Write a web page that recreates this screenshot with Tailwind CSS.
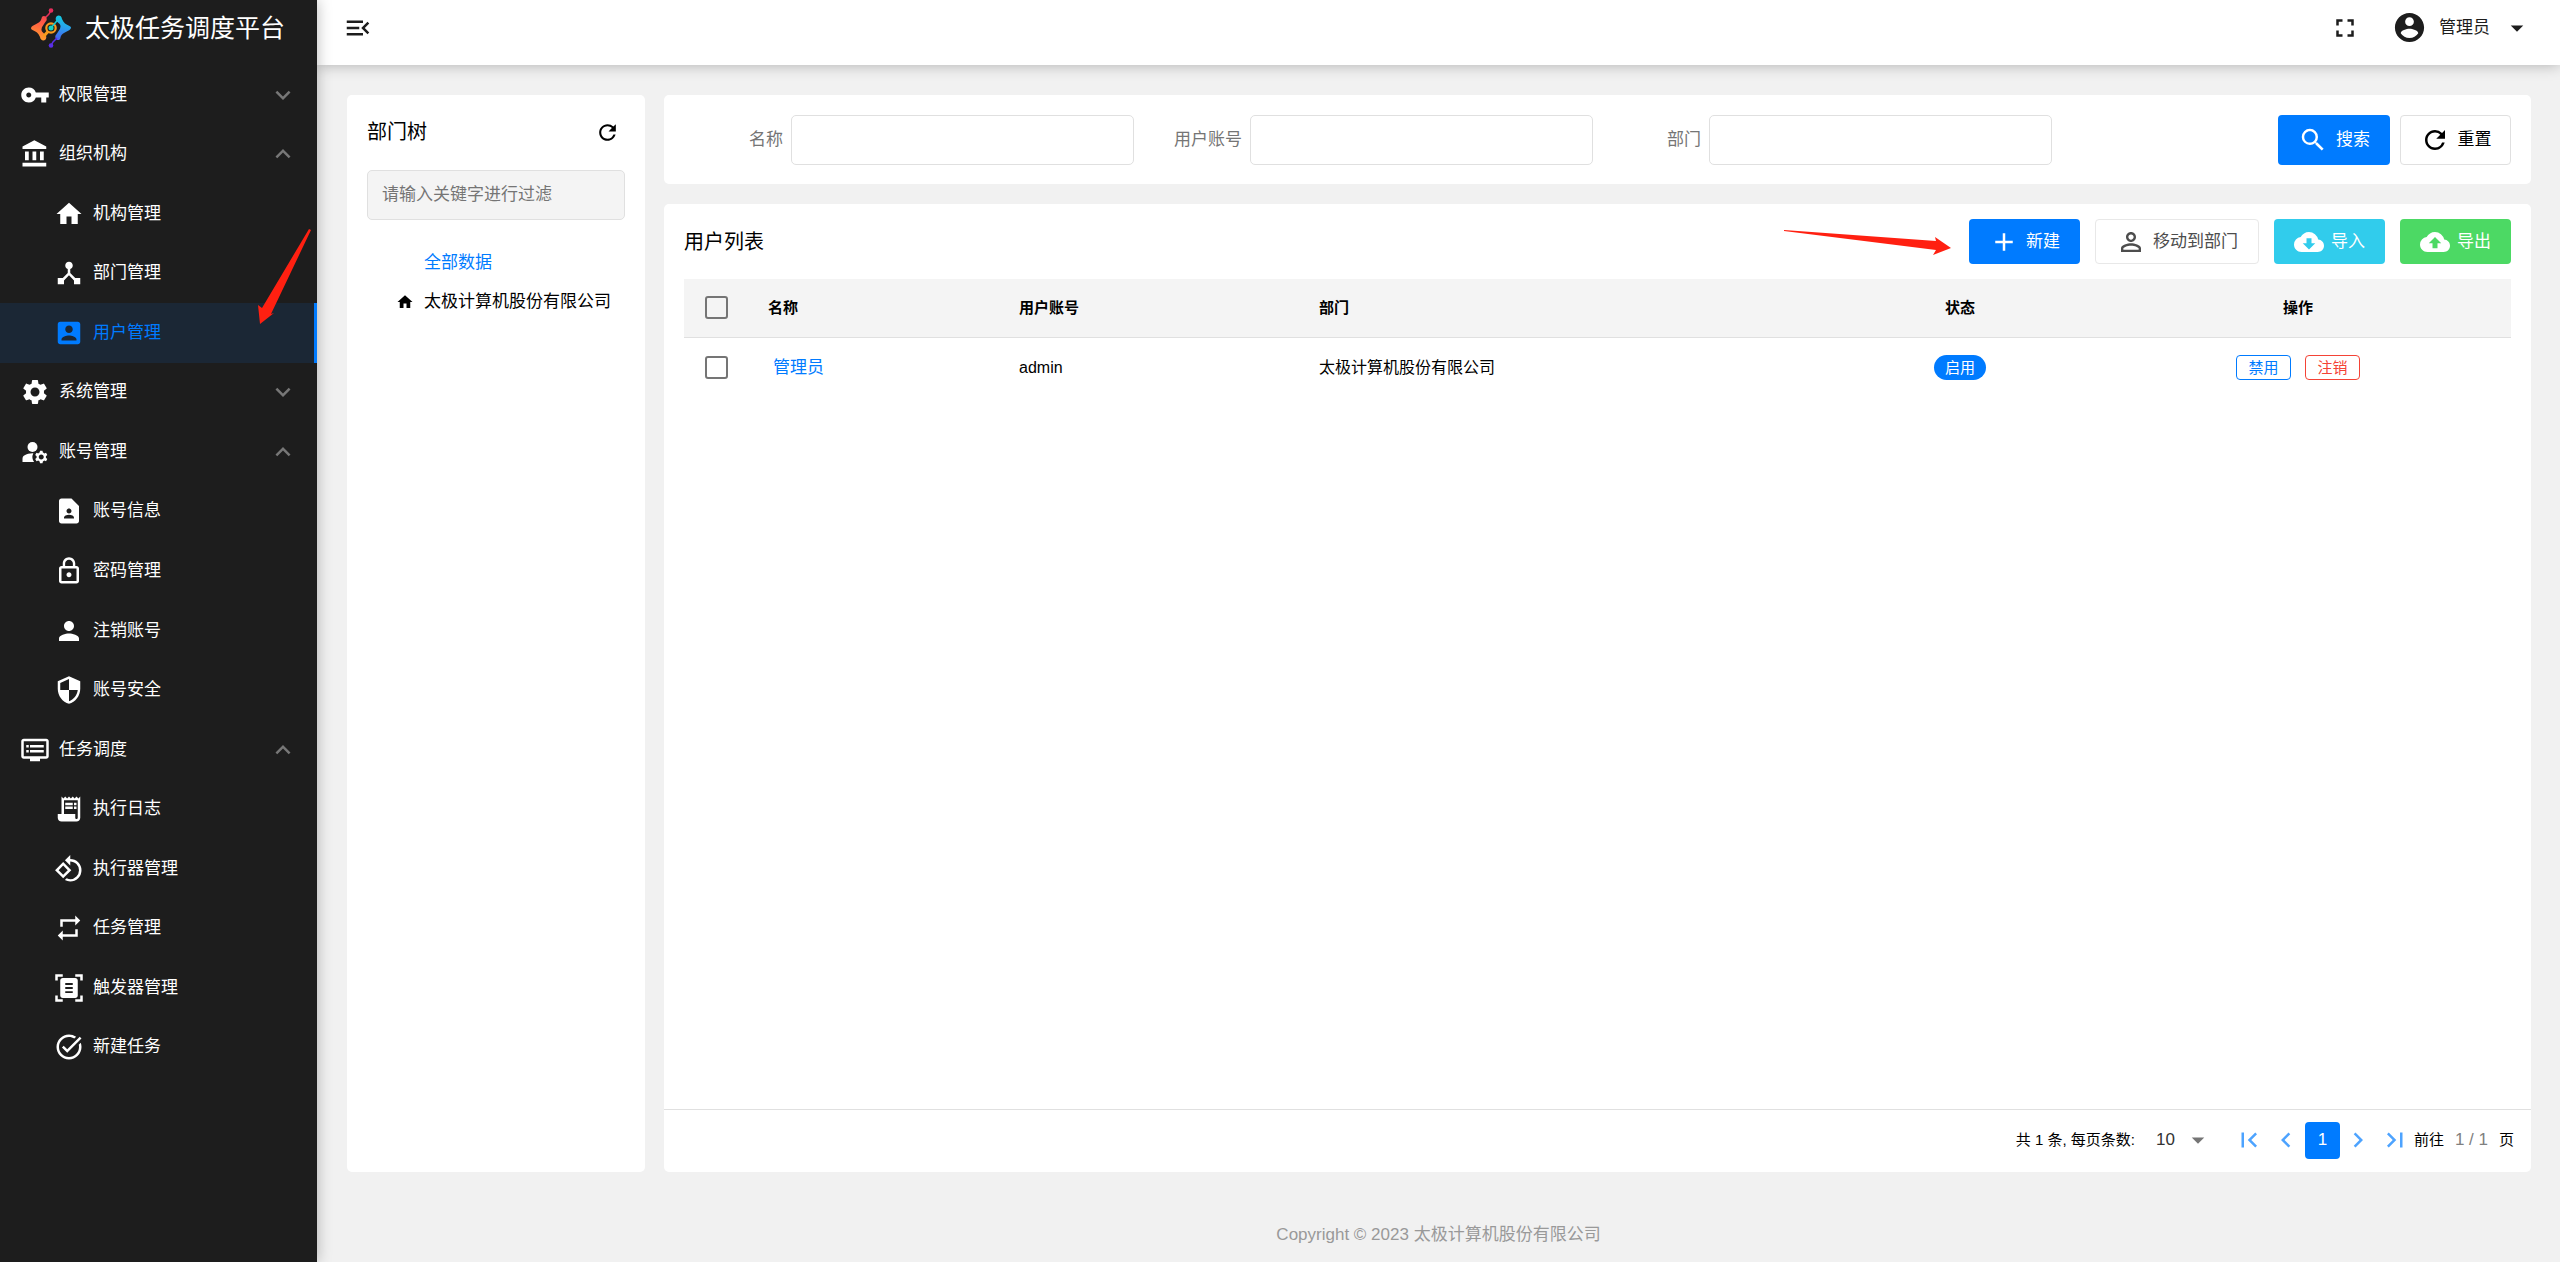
<!DOCTYPE html>
<html lang="zh-CN">
<head>
<meta charset="utf-8">
<title>太极任务调度平台</title>
<script src="https://cdn.jsdelivr.net/npm/@tailwindcss/browser@4"></script>
</head>
<body class="relative flex min-h-screen bg-[#f1f1f1] font-['Liberation_Sans','Noto_Sans_CJK_SC',sans-serif] text-[17px] leading-6 text-black">

<svg class="hidden" aria-hidden="true">
  <symbol id="key" viewBox="0 0 24 24"><path d="M12.65 10A5.99 5.99 0 0 0 7 6c-3.31 0-6 2.69-6 6s2.69 6 6 6a5.99 5.99 0 0 0 5.65-4H17v4h4v-4h2v-4H12.65zM7 14c-1.1 0-2-.9-2-2s.9-2 2-2 2 .9 2 2-.9 2-2 2z"/></symbol>
  <symbol id="bank" viewBox="0 0 24 24"><path d="M4 10v7h3v-7H4zm6 0v7h3v-7h-3zM2 22h19v-3H2v3zm14-12v7h3v-7h-3zm-4.5-9L2 6v2h19V6l-9.500-5z"/></symbol>
  <symbol id="home" viewBox="0 0 24 24"><path d="M10 20v-6h4v6h5v-8h3L12 3 2 12h3v8z"/></symbol>
  <symbol id="hub" viewBox="0 0 24 24"><path d="M17 16l-4-4V8.820C14.160 8.400 15 7.300 15 6c0-1.660-1.340-3-3-3S9 4.340 9 6c0 1.300.84 2.400 2 2.820V12l-4 4H3v5h5v-3.050l4-4.200 4 4.200V21h5v-5h-4z"/></symbol>
  <symbol id="userbox" viewBox="0 0 24 24"><path d="M3 5v14c0 1.100.89 2 2 2h14c1.100 0 2-.9 2-2V5c0-1.100-.9-2-2-2H5a2 2 0 0 0-2 2zm12 4c0 1.660-1.340 3-3 3s-3-1.340-3-3 1.340-3 3-3 3 1.340 3 3zm-9 8c0-2 4-3.100 6-3.100s6 1.100 6 3.100v1H6v-1z"/></symbol>
  <symbol id="gear" viewBox="0 0 24 24"><path d="M19.140 12.940c.04-.3.06-.61.06-.94 0-.32-.02-.64-.07-.94l2.030-1.580a.49.49 0 0 0 .12-.61l-1.920-3.320a.488.488 0 0 0-.59-.22l-2.390.96c-.5-.38-1.030-.7-1.620-.94l-.36-2.540a.484.484 0 0 0-.48-.41h-3.840c-.24 0-.43.17-.47.41l-.36 2.540c-.59.24-1.130.57-1.620.94l-2.390-.96c-.22-.08-.47 0-.59.22L2.740 8.870c-.12.21-.08.47.12.61l2.030 1.580c-.05.3-.09.63-.09.94s.02.64.07.94l-2.030 1.580a.49.49 0 0 0-.12.61l1.920 3.320c.12.22.37.29.59.22l2.390-.96c.5.38 1.030.7 1.620.94l.36 2.540c.05.24.24.41.48.41h3.840c.24 0 .44-.17.47-.41l.36-2.540c.59-.24 1.130-.56 1.620-.94l2.390.96c.22.08.47 0 .59-.22l1.920-3.320c.12-.22.07-.47-.12-.61l-2.010-1.580zM12 15.600c-1.980 0-3.600-1.620-3.600-3.600s1.620-3.600 3.600-3.600 3.600 1.620 3.600 3.600-1.620 3.600-3.600 3.600z"/></symbol>
  <symbol id="manage" viewBox="0 0 24 24"><circle cx="10" cy="8" r="4"/><path d="M10.670 13.020C10.450 13.010 10.230 13 10 13c-2.420 0-4.680.67-6.610 1.820-.88.52-1.390 1.500-1.390 2.530V20h9.260a6.963 6.963 0 0 1-.59-6.980zM20.750 16c0-.22-.03-.42-.06-.63l1.140-1.010-1-1.730-1.450.49c-.32-.27-.68-.48-1.080-.63L18 11h-2l-.3 1.490c-.4.15-.76.36-1.080.63l-1.450-.49-1 1.730 1.140 1.010c-.03.21-.06.41-.06.63s.03.42.06.63l-1.140 1.010 1 1.730 1.450-.49c.32.27.68.48 1.080.63L16 21h2l.3-1.490c.4-.15.76-.36 1.080-.63l1.450.49 1-1.730-1.140-1.010c.03-.21.06-.41.06-.63zM17 18c-1.100 0-2-.9-2-2s.9-2 2-2 2 .9 2 2-.9 2-2 2z"/></symbol>
  <symbol id="contact" viewBox="0 0 24 24"><path d="M14 2H6c-1.100 0-2 .9-2 2v16c0 1.100.9 2 2 2h12c1.100 0 2-.9 2-2V8l-6-6zm-2 8c1.100 0 2 .9 2 2s-.9 2-2 2-2-.9-2-2 .9-2 2-2zm4 8H8v-.57c0-.81.48-1.530 1.220-1.850a6.950 6.950 0 0 1 5.560 0A2.010 2.010 0 0 1 16 17.430V18z"/></symbol>
  <symbol id="lock" viewBox="0 0 24 24"><path d="M12 17c1.100 0 2-.9 2-2s-.9-2-2-2-2 .9-2 2 .9 2 2 2zm6-9h-1V6c0-2.760-2.240-5-5-5S7 3.240 7 6v2H6c-1.100 0-2 .9-2 2v10c0 1.100.9 2 2 2h12c1.100 0 2-.9 2-2V10c0-1.100-.9-2-2-2zM8.900 6c0-1.710 1.390-3.100 3.100-3.100s3.100 1.390 3.100 3.100v2H8.900V6zM18 20H6V10h12v10z"/></symbol>
  <symbol id="person" viewBox="0 0 24 24"><path d="M12 12c2.210 0 4-1.790 4-4s-1.790-4-4-4-4 1.790-4 4 1.790 4 4 4zm0 2c-2.670 0-8 1.340-8 4v2h16v-2c0-2.660-5.330-4-8-4z"/></symbol>
  <symbol id="shield" viewBox="0 0 24 24"><path d="M12 1L3 5v6c0 5.550 3.840 10.740 9 12 5.160-1.260 9-6.450 9-12V5l-9-4zm0 10.990h7c-.53 4.120-3.280 7.790-7 8.940V12H5V6.300l7-3.110v8.800z"/></symbol>
  <symbol id="dvr" viewBox="0 0 24 24"><path d="M21 3H3c-1.100 0-2 .9-2 2v12c0 1.100.9 2 2 2h5v2h8v-2h5c1.100 0 1.990-.9 1.990-2L23 5c0-1.100-.9-2-2-2zm0 14H3V5h18v12zm-2-9H8v2h11V8zm0 4H8v2h11v-2zM7 8H5v2h2V8zm0 4H5v2h2v-2z"/></symbol>
  <symbol id="receipt" viewBox="0 0 24 24"><path d="M19.500 3.500L18 2l-1.500 1.500L15 2l-1.500 1.500L12 2l-1.500 1.500L9 2 7.500 3.500 6 2v14H3v3c0 1.660 1.340 3 3 3h12c1.660 0 3-1.340 3-3V2l-1.500 1.500zM19 19c0 .55-.45 1-1 1s-1-.45-1-1v-3H8V5h11v14z"/><path d="M9 7h6v2H9zM16 7h2v2h-2zM9 10h6v2H9zM16 10h2v2h-2z"/></symbol>
  <symbol id="rotate" viewBox="0 0 24 24"><path d="M7.340 6.410L.86 12.900l6.490 6.480 6.490-6.480-6.500-6.490zM3.690 12.900l3.660-3.660L11 12.900l-3.660 3.660-3.650-3.660zm15.670-6.260A8.950 8.950 0 0 0 13 4V.76L8.760 5 13 9.240V6c1.790 0 3.580.68 4.950 2.050a7.007 7.007 0 0 1 0 9.900 6.973 6.973 0 0 1-7.790 1.440l-1.490 1.490C10.020 21.620 11.510 22 13 22c2.300 0 4.610-.88 6.360-2.640a8.980 8.980 0 0 0 0-12.720z"/></symbol>
  <symbol id="repeat" viewBox="0 0 24 24"><path d="M7 7h10v3l4-4-4-4v3H5v6h2V7zm10 10H7v-3l-4 4 4 4v-3h12v-6h-2v4z"/></symbol>
  <symbol id="scan" viewBox="0 0 24 24"><path fill-rule="evenodd" d="M3 6H1V1h6v2H3zM21 6V3h-4V1h6v5zM3 18v3h4v2H1v-5zM21 18h2v5h-6v-2h4zM7 4h10c1.100 0 2 .9 2 2v12c0 1.100-.9 2-2 2H7c-1.100 0-2-.9-2-2V6c0-1.100.9-2 2-2zm2 4v1.500h6V8zm0 3.250v1.500h6v-1.500zm0 3.250V16h6v-1.500z"/></symbol>
  <symbol id="taskdone" viewBox="0 0 24 24"><path d="M22 5.180L10.590 16.600l-4.240-4.240 1.410-1.410 2.830 2.830 10-10L22 5.180zM19.790 10.220c.13.570.21 1.170.21 1.780 0 4.420-3.580 8-8 8s-8-3.580-8-8 3.580-8 8-8c1.580 0 3.040.46 4.280 1.250l1.440-1.440A9.900 9.900 0 0 0 12 2C6.480 2 2 6.480 2 12s4.480 10 10 10 10-4.480 10-10c0-1.190-.22-2.330-.6-3.390l-1.610 1.610z"/></symbol>
  <symbol id="down" viewBox="0 0 24 24"><path d="M7.410 8.590L12 13.170l4.590-4.580L18 10l-6 6-6-6z"/></symbol>
  <symbol id="up" viewBox="0 0 24 24"><path d="M7.410 15.410L12 10.830l4.590 4.580L18 14l-6-6-6 6z"/></symbol>
  <symbol id="menuopen" viewBox="0 0 24 24"><path d="M3 18h13v-2H3v2zm0-5h10v-2H3v2zm0-7v2h13V6H3zm18 9.590L17.420 12 21 8.410 19.590 7l-5 5 5 5L21 15.590z"/></symbol>
  <symbol id="fullscreen" viewBox="0 0 24 24"><path d="M7 14H5v5h5v-2H7v-3zm-2-4h2V7h3V5H5v5zm12 7h-3v2h5v-5h-2v3zM14 5v2h3v3h2V5h-5z"/></symbol>
  <symbol id="account" viewBox="0 0 24 24"><path d="M12 2C6.480 2 2 6.480 2 12s4.480 10 10 10 10-4.480 10-10S17.520 2 12 2zm0 3c1.660 0 3 1.340 3 3s-1.340 3-3 3-3-1.340-3-3 1.340-3 3-3zm0 14.200a7.200 7.200 0 0 1-6-3.220c.03-1.990 4-3.080 6-3.080 1.990 0 5.970 1.090 6 3.080a7.200 7.200 0 0 1-6 3.220z"/></symbol>
  <symbol id="caret" viewBox="0 0 24 24"><path d="M7 10l5 5 5-5z"/></symbol>
  <symbol id="refresh" viewBox="0 0 24 24"><path d="M17.650 6.350A7.958 7.958 0 0 0 12 4c-4.420 0-7.990 3.580-7.990 8s3.570 8 7.990 8c3.730 0 6.840-2.550 7.730-6h-2.080A5.990 5.990 0 0 1 12 18c-3.310 0-6-2.690-6-6s2.690-6 6-6c1.660 0 3.140.69 4.220 1.780L13 11h7V4l-2.350 2.350z"/></symbol>
  <symbol id="search" viewBox="0 0 24 24"><path d="M15.500 14h-.79l-.28-.27A6.471 6.471 0 0 0 16 9.500 6.500 6.500 0 1 0 9.500 16c1.610 0 3.090-.59 4.230-1.570l.27.28v.79l5 4.990L20.490 19l-4.990-5zm-6 0C7.010 14 5 11.990 5 9.500S7.010 5 9.500 5 14 7.010 14 9.500 11.990 14 9.500 14z"/></symbol>
  <symbol id="add" viewBox="0 0 24 24"><path d="M19 13h-6v6h-2v-6H5v-2h6V5h2v6h6v2z"/></symbol>
  <symbol id="persono" viewBox="0 0 24 24"><path d="M12 5.900c1.160 0 2.100.94 2.100 2.100s-.94 2.100-2.100 2.100S9.900 9.160 9.900 8s.94-2.100 2.100-2.100m0 9c2.970 0 6.100 1.460 6.100 2.100v1.100H5.900V17c0-.64 3.130-2.100 6.100-2.100M12 4C9.790 4 8 5.790 8 8s1.790 4 4 4 4-1.790 4-4-1.790-4-4-4zm0 9c-2.670 0-8 1.340-8 4v3h16v-3c0-2.660-5.330-4-8-4z"/></symbol>
  <symbol id="clouddown" viewBox="0 0 24 24"><path fill-rule="evenodd" d="M19.350 10.040A7.490 7.490 0 0 0 12 4C9.110 4 6.600 5.640 5.350 8.040A5.994 5.994 0 0 0 0 14c0 3.310 2.690 6 6 6h13c2.760 0 5-2.240 5-5 0-2.640-2.050-4.780-4.650-4.960zM17 13l-5 5-5-5h3V9h4v4h3z"/></symbol>
  <symbol id="cloudup" viewBox="0 0 24 24"><path fill-rule="evenodd" d="M19.350 10.040A7.490 7.490 0 0 0 12 4C9.110 4 6.600 5.640 5.350 8.040A5.994 5.994 0 0 0 0 14c0 3.310 2.690 6 6 6h13c2.760 0 5-2.240 5-5 0-2.640-2.050-4.780-4.650-4.960zM14 13v4h-4v-4H7l5-5 5 5h-3z"/></symbol>
  <symbol id="first" viewBox="0 0 24 24"><path d="M18.410 16.590L13.820 12l4.590-4.590L17 6l-6 6 6 6zM6 6h2v12H6z"/></symbol>
  <symbol id="last" viewBox="0 0 24 24"><path d="M5.590 7.410L10.180 12l-4.590 4.590L7 18l6-6-6-6zM16 6h2v12h-2z"/></symbol>
  <symbol id="prev" viewBox="0 0 24 24"><path d="M15.410 7.410L14 6l-6 6 6 6 1.410-1.410L10.830 12z"/></symbol>
  <symbol id="next" viewBox="0 0 24 24"><path d="M10 6L8.590 7.410 13.170 12l-4.580 4.590L10 18l6-6z"/></symbol>
</svg>

<aside class="z-20 w-[317px] shrink-0 bg-[#1d1d1d] text-white shadow-[0_0_14px_rgba(0,0,0,0.28)]">
  <div class="flex h-[65px] items-center gap-[14px] pb-[10px] pl-[31px]">
    <svg class="size-10" viewBox="0 0 40 40" fill="none">
      <defs>
        <linearGradient id="warm" x1="20" y1="0" x2="12" y2="32" gradientUnits="userSpaceOnUse"><stop stop-color="#e62e5c"/><stop offset=".5" stop-color="#ff5a45"/><stop offset="1" stop-color="#ff9a2e"/></linearGradient>
        <linearGradient id="cool" x1="28" y1="8" x2="20" y2="40" gradientUnits="userSpaceOnUse"><stop stop-color="#12cbe0"/><stop offset=".4" stop-color="#3191ee"/><stop offset="1" stop-color="#5a2ee6"/></linearGradient>
      </defs>
      <path d="M20 2.500L18 6l-4 4" stroke="#e62e5c" stroke-width="1.500"/>
      <circle cx="20" cy="2.500" r="2.300" fill="#e62e5c"/>
      <path d="M10.500 10.500C9.500 15 5 15.500 1.500 18c-2 1.500-2 3 0 4C5 23.500 7.500 25 9 29c.5 4.500 6 4.500 6.300.5.2-3-2.300-3.500-4.300-6-2-3.500 2-7 4.500-11 1.500-4.500-4.500-6.500-5-2z" fill="url(#warm)"/>
      <circle cx="20" cy="20" r="4.700" stroke="#f79a1c" stroke-width="2.200"/>
      <path d="M12.500 28.500l4.500-5" stroke="#f79a1c" stroke-width="3"/>
      <path d="M29.500 29.500C30.500 25 35 24.500 38.500 22c2-1.500 2-3 0-4C35 16.500 32.500 15 31 11c-.5-4.500-6-4.500-6.300-.5-.2 3 2.300 3.500 4.300 6 2 3.500-2 7-4.500 11-1.500 4.500 4.500 6.500 5 2z" fill="url(#cool)"/>
      <path d="M20 37.500l2-3.500 4-4" stroke="#5a2ee6" stroke-width="1.500"/>
      <circle cx="20" cy="37.500" r="2.300" fill="#5a2ee6"/>
      <path d="M20 20l7-8.500" stroke="#12cbd0" stroke-width="1.500"/>
      <circle cx="20" cy="20" r="2.500" fill="#14d4c0"/>
    </svg>
    <h1 class="text-[25px] leading-8">太极任务调度平台</h1>
  </div>
  <nav class="grid h-[1012px] auto-rows-fr [&_a]:flex [&_a]:items-center [&_a]:gap-[9px] [&_svg]:size-[30px] [&_svg]:fill-current">
    <a href="#" class="pr-[19px] pl-5"><svg><use href="#key"/></svg><span class="flex-1">权限管理</span><svg class="text-[#777]"><use href="#down"/></svg></a>
    <a href="#" class="pr-[19px] pl-5"><svg><use href="#bank"/></svg><span class="flex-1">组织机构</span><svg class="text-[#777]"><use href="#up"/></svg></a>
    <a href="#" class="pl-[54px]"><svg><use href="#home"/></svg>机构管理</a>
    <a href="#" class="pl-[54px]"><svg><use href="#hub"/></svg>部门管理</a>
    <a href="#" class="border-r-3 border-[#007bff] bg-[#1b2735] pl-[54px] text-[#007bff]"><svg><use href="#userbox"/></svg>用户管理</a>
    <a href="#" class="pr-[19px] pl-5"><svg><use href="#gear"/></svg><span class="flex-1">系统管理</span><svg class="text-[#777]"><use href="#down"/></svg></a>
    <a href="#" class="pr-[19px] pl-5"><svg><use href="#manage"/></svg><span class="flex-1">账号管理</span><svg class="text-[#777]"><use href="#up"/></svg></a>
    <a href="#" class="pl-[54px]"><svg><use href="#contact"/></svg>账号信息</a>
    <a href="#" class="pl-[54px]"><svg><use href="#lock"/></svg>密码管理</a>
    <a href="#" class="pl-[54px]"><svg><use href="#person"/></svg>注销账号</a>
    <a href="#" class="pl-[54px]"><svg><use href="#shield"/></svg>账号安全</a>
    <a href="#" class="pr-[19px] pl-5"><svg><use href="#dvr"/></svg><span class="flex-1">任务调度</span><svg class="text-[#777]"><use href="#up"/></svg></a>
    <a href="#" class="pl-[54px]"><svg><use href="#receipt"/></svg>执行日志</a>
    <a href="#" class="pl-[54px]"><svg><use href="#rotate"/></svg>执行器管理</a>
    <a href="#" class="pl-[54px]"><svg><use href="#repeat"/></svg>任务管理</a>
    <a href="#" class="pl-[54px]"><svg><use href="#scan"/></svg>触发器管理</a>
    <a href="#" class="pl-[54px]"><svg><use href="#taskdone"/></svg>新建任务</a>
  </nav>
</aside>

<div class="flex min-w-0 flex-1 flex-col">
  <header class="z-10 flex h-[65px] items-center justify-between bg-white pr-7 pb-[10px] pl-[26px] text-[#1d1d1d] shadow-[0_0_14px_rgba(0,0,0,0.28)]">
    <button type="button" aria-label="收起菜单"><svg class="size-[30px] fill-current"><use href="#menuopen"/></svg></button>
    <div class="flex items-center">
      <button type="button" aria-label="全屏" class="mr-8"><svg class="size-[30px] fill-current"><use href="#fullscreen"/></svg></button>
      <button type="button" class="flex items-center gap-3"><svg class="size-[35px] fill-current"><use href="#account"/></svg>管理员<svg class="size-[30px] fill-current"><use href="#caret"/></svg></button>
    </div>
  </header>

  <main class="flex flex-1 gap-[19px] pt-[30px] pr-[29px] pl-[30px]">
    <section class="w-[298px] shrink-0 rounded-[5px] bg-white px-5 pt-[22px]">
      <div class="flex items-center justify-between pr-[5px]">
        <h2 class="text-xl leading-[30px]">部门树</h2>
        <button type="button" aria-label="刷新"><svg class="size-[25px] fill-current"><use href="#refresh"/></svg></button>
      </div>
      <input type="text" aria-label="过滤部门" placeholder="请输入关键字进行过滤" class="mt-[23px] h-[50px] w-full rounded-[5px] border border-[#e0e0e0] bg-[#f4f4f4] px-[14px] placeholder:text-[#757575]">
      <ul class="mt-[23px] flex flex-col">
        <li class="flex h-[39px] items-center pl-[57px] text-[#007bff]">全部数据</li>
        <li class="flex h-[39px] items-center gap-[10px] pl-[29px]"><svg class="size-[18px] fill-current"><use href="#home"/></svg>太极计算机股份有限公司</li>
      </ul>
    </section>

    <div class="flex min-w-0 flex-1 flex-col gap-5">
      <form class="grid grid-cols-4 rounded-[5px] bg-white pt-5 pr-5 pb-[19px] pl-[11px]">
        <div class="flex items-center gap-2"><label for="f-name" class="w-[108px] shrink-0 text-right text-[#757575]">名称</label><input id="f-name" type="text" class="h-[50px] min-w-0 flex-1 rounded-[5px] border border-[#e0e0e0] px-3"></div>
        <div class="flex items-center gap-2"><label for="f-user" class="w-[108px] shrink-0 text-right text-[#757575]">用户账号</label><input id="f-user" type="text" class="h-[50px] min-w-0 flex-1 rounded-[5px] border border-[#e0e0e0] px-3"></div>
        <div class="flex items-center gap-2"><label for="f-dept" class="w-[108px] shrink-0 text-right text-[#757575]">部门</label><input id="f-dept" type="text" class="h-[50px] min-w-0 flex-1 rounded-[5px] border border-[#e0e0e0] px-3"></div>
        <div class="flex justify-end gap-[10px]">
          <button type="button" class="flex h-[50px] w-[112px] items-center justify-center gap-2 rounded-[4px] bg-[#007bff] text-white"><svg class="size-[30px] fill-current"><use href="#search"/></svg>搜索</button>
          <button type="reset" class="flex h-[50px] w-[111px] items-center justify-center gap-2 rounded-[4px] border border-[#e0e0e0]"><svg class="size-[30px] fill-current"><use href="#refresh"/></svg>重置</button>
        </div>
      </form>

      <section class="flex flex-1 flex-col rounded-[5px] bg-white">
        <div class="flex items-center gap-[15px] px-5 py-[15px]">
          <h2 class="flex-1 text-xl leading-[30px]">用户列表</h2>
          <button type="button" class="flex h-[45px] w-[111px] items-center justify-center gap-[7px] rounded-[4px] bg-[#007bff] text-white"><svg class="size-[30px] fill-current"><use href="#add"/></svg>新建</button>
          <button type="button" class="flex h-[45px] w-[164px] items-center justify-center gap-[7px] rounded-[4px] border border-[#e8e8e8] text-[#4d4d4d]"><svg class="size-[30px] fill-current"><use href="#persono"/></svg>移动到部门</button>
          <button type="button" class="flex h-[45px] w-[111px] items-center justify-center gap-[7px] rounded-[4px] bg-[#31ccec] text-white"><svg class="size-[30px] fill-current"><use href="#clouddown"/></svg>导入</button>
          <button type="button" class="flex h-[45px] w-[111px] items-center justify-center gap-[7px] rounded-[4px] bg-[#4cd964] text-white"><svg class="size-[30px] fill-current"><use href="#cloudup"/></svg>导出</button>
        </div>
        <div class="px-5">
          <table class="w-full table-fixed border-collapse text-left">
            <colgroup><col class="w-[64px]"><col class="w-[251px]"><col class="w-[300px]"><col><col class="w-[250px]"><col class="w-[426px]"></colgroup>
            <thead class="border-b border-[#e0e0e0] bg-[#f4f4f4] text-[15px]">
              <tr class="h-[58px]">
                <th class="pl-[21px]"><input type="checkbox" aria-label="全选" class="block size-[23px] appearance-none rounded-[3px] border-2 border-[#757575]"></th>
                <th class="px-5">名称</th><th class="px-5">用户账号</th><th class="px-5">部门</th><th class="text-center">状态</th><th class="text-center">操作</th>
              </tr>
            </thead>
            <tbody class="text-base">
              <tr class="h-[61px]">
                <td class="pl-[21px]"><input type="checkbox" aria-label="选择管理员" class="block size-[23px] appearance-none rounded-[3px] border-2 border-[#757575]"></td>
                <td class="px-[25px] text-[17px]"><a href="#" class="text-[#007bff]">管理员</a></td>
                <td class="px-5">admin</td>
                <td class="px-5">太极计算机股份有限公司</td>
                <td><span class="mx-auto flex h-[25px] w-[52px] items-center justify-center rounded-full bg-[#007bff] text-[15px] text-white">启用</span></td>
                <td><div class="flex justify-center gap-[14px] text-[15px]"><button type="button" class="flex h-[25px] w-[55px] items-center justify-center rounded-[4px] border border-[#007bff] text-[#007bff]">禁用</button><button type="button" class="flex h-[25px] w-[55px] items-center justify-center rounded-[4px] border border-[#f44336] text-[#f44336]">注销</button></div></td>
              </tr>
            </tbody>
          </table>
        </div>
        <div class="mt-auto flex h-[63px] items-center justify-end border-t border-[#e0e0e0] pr-[17px] pb-[2px] text-[15px]">
          <label for="size">共 1 条, 每页条数:</label>
          <div class="ml-[21px] flex w-[57px] items-center text-[#333]">
            <select id="size" class="w-full appearance-none bg-transparent text-[17px]"><option>10</option></select>
            <svg class="-ml-[30px] size-[30px] shrink-0 fill-[#757575]"><use href="#caret"/></svg>
          </div>
          <div class="ml-[18px] flex items-center text-[#4da3ff]">
            <button type="button" aria-label="第一页" class="flex w-[37px] justify-center"><svg class="size-[30px] fill-current"><use href="#first"/></svg></button>
            <button type="button" aria-label="上一页" class="flex w-[37px] justify-center"><svg class="size-[30px] fill-current"><use href="#prev"/></svg></button>
            <button type="button" class="h-[37px] w-[35px] rounded-[4px] bg-[#007bff] text-[17px] text-white">1</button>
            <button type="button" aria-label="下一页" class="flex w-[37px] justify-center"><svg class="size-[30px] fill-current"><use href="#next"/></svg></button>
            <button type="button" aria-label="最后一页" class="flex w-[37px] justify-center"><svg class="size-[30px] fill-current"><use href="#last"/></svg></button>
          </div>
          <label for="page">前往</label>
          <input id="page" type="text" value="1 / 1" class="w-[55px] text-center text-[17px] text-[#808080]">
          <span>页</span>
        </div>
      </section>
    </div>
  </main>

  <footer class="flex h-[90px] items-end justify-center pb-[15px] text-[#999]">Copyright © 2023 太极计算机股份有限公司</footer>
</div>

<svg class="pointer-events-none absolute top-[228px] left-[258px] z-30 h-[96px] w-[54px] fill-[#ff2011]" viewBox="0 0 54 96" aria-hidden="true"><path d="M51 1L53 2 13 86l3-1L2 96 0 77l4 3z"/></svg>
<svg class="pointer-events-none absolute top-[229px] left-[1783px] z-30 h-[27px] w-[168px] fill-[#ff2011]" viewBox="0 0 168 27" aria-hidden="true"><path d="M1 1L153 12l-1-4 16 11-18 7 3-5L1 2z"/></svg>
</body>
</html>
